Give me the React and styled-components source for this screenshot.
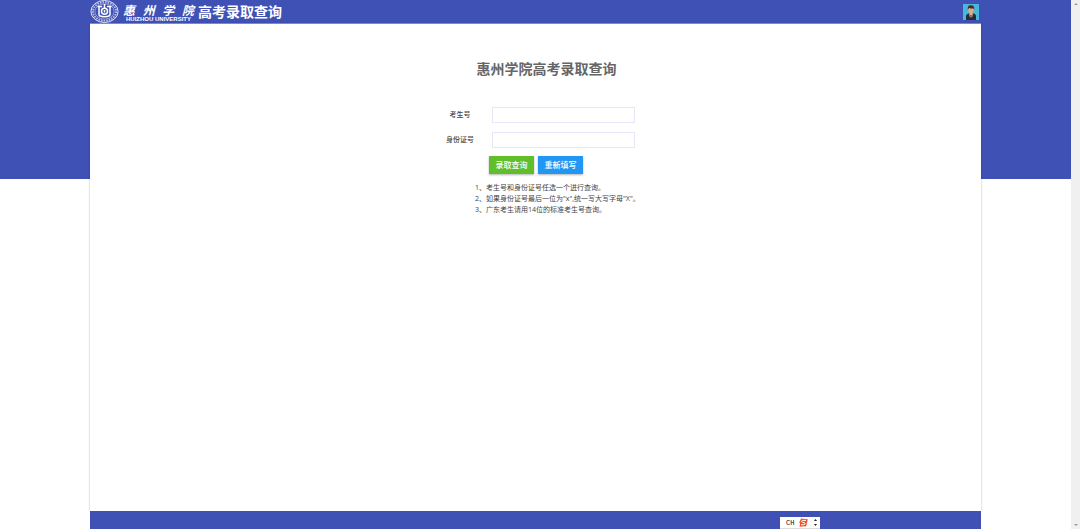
import React, { useState } from 'react';
import styled, { createGlobalStyle } from 'styled-components';

const GlobalStyle = createGlobalStyle`
  * {
    box-sizing: border-box;
  }

  body {
    margin: 0;
    background: #fff;
    color: #444;
    font-family: "Open Sans", "Noto Sans CJK SC", sans-serif;
    font-size: 7px;
  }
`;

const Page = styled.div`
  display: flex;
  height: 100vh;
  overflow: hidden;
`;

const Backdrop = styled.div`
  flex: 1;
  display: flex;
  flex-direction: column;
  padding: 0 90px;
  background: linear-gradient(#3f51b5 179px, #fff 179px);
`;

const Header = styled.header`
  display: flex;
  align-items: center;
  justify-content: space-between;
  height: 24px;
  padding-right: 2px;
  border-bottom: 1px solid #8f99d3;
  background: #3f51b5;
`;

const Brand = styled.div`
  display: flex;
  align-items: flex-start;
  gap: 4px;
  height: 24px;
  color: #fff;
`;

const Wordmark = styled.div`
  display: flex;
  flex-direction: column;
  align-items: center;
  width: 71px;
  padding-top: 3px;
`;

const SchoolName = styled.div`
  display: flex;
  justify-content: space-between;
  width: 100%;
  font-family: "Noto Sans CJK SC", sans-serif;
  font-size: 12px;
  font-style: italic;
  font-weight: bold;
  line-height: 13px;
`;

const SchoolNameEn = styled.div`
  font-family: "Liberation Sans", Arial, sans-serif;
  font-size: 6px;
  font-weight: bold;
  line-height: 6px;
  white-space: nowrap;
`;

const SystemName = styled.div`
  font-family: "Noto Sans CJK SC", sans-serif;
  font-size: 14px;
  font-weight: bold;
  line-height: 22px;
`;

const AvatarButton = styled.button`
  display: flex;
  padding: 0;
  border: 0;
  background: none;
  cursor: pointer;
`;

const Panel = styled.main`
  flex: 1;
  display: flex;
  flex-direction: column;
  align-items: center;
  padding: 33px 0 0 22px;
  background: #fff;
  box-shadow: 0 0 2px rgba(0, 0, 0, 0.3);
`;

const Title = styled.h1`
  margin: 0;
  color: #666;
  font-family: "Noto Sans CJK SC", sans-serif;
  font-size: 14px;
  font-weight: bold;
  line-height: 22px;
`;

const Form = styled.form`
  width: 237px;
  padding-top: 27px;
`;

const Field = styled.div`
  display: grid;
  grid-template-columns: 64px 143px;
  align-items: center;
  margin-bottom: 8px;
`;

const Label = styled.label`
  font-weight: 500;
  line-height: 17px;
  text-align: center;
`;

const TextInput = styled.input`
  height: 16px;
  padding: 0 4px;
  border: 1px solid #e6e6fa;
  background: #fff;
  font: inherit;
  outline: none;

  &:focus {
    border-color: #2196f3;
  }
`;

const Actions = styled.div`
  display: flex;
  gap: 4px;
  padding-left: 61px;
`;

const Button = styled.button`
  width: 45px;
  height: 18px;
  padding: 0;
  border: 0;
  background: ${({ $color }) => $color};
  box-shadow: 0 1px 2px rgba(0, 0, 0, 0.3);
  color: #fff;
  font-family: inherit;
  font-size: 8px;
  font-weight: 500;
  line-height: 18px;
  cursor: pointer;
`;

const Notes = styled.div`
  padding: 8px 0 0 47px;
  line-height: 11px;
  white-space: nowrap;
`;

const Footer = styled.footer`
  height: 18px;
  background: #3f51b5;
`;

const Scrollbar = styled.div`
  display: flex;
  flex-direction: column;
  justify-content: space-between;
  align-items: center;
  width: 9px;
  padding: 3px 0;
  background: #f0f0f0;
`;

const LanguageBar = styled.div`
  position: fixed;
  right: 260px;
  bottom: 0;
  display: flex;
  align-items: center;
  justify-content: space-between;
  width: 40px;
  height: 12px;
  padding: 0 2px 0 6px;
  border-bottom: 1px solid #ddd;
  background: #fff;
  color: #111;
  font-family: "Liberation Mono", monospace;
  font-size: 7px;
  line-height: 12px;
`;

const Emblem = () => (
  <svg width="29" height="24" viewBox="0 0 29 24" fill="none" stroke="#fff">
    <ellipse cx="14.5" cy="11.5" rx="13.6" ry="11" strokeWidth="1" opacity="0.85" />
    <ellipse cx="14.5" cy="11.5" rx="11.6" ry="9.2" strokeWidth="2" strokeDasharray="1.6 1" opacity="0.6" />
    <ellipse cx="14.5" cy="11.5" rx="9.6" ry="7.6" strokeWidth="0.6" opacity="0.7" />
    <path d="M7.5 6.5H12M17 6.5H21.5M9 6.5V15.5M20 6.5V15.5M9 15.5Q14.5 18 20 15.5" strokeWidth="1.5" />
    <circle cx="14.5" cy="11.3" r="3" strokeWidth="1.5" />
    <path d="M14.5 4V8M14.5 10V12.6" strokeWidth="1.5" />
  </svg>
);

const Avatar = () => (
  <svg width="16" height="16" viewBox="0 0 16 16">
    <path d="M0 0H16V16H0Z" fill="#46b8da" />
    <path d="M3 16V12Q3 10 6 9.5H10Q13 10 13 12V16Z" fill="#292b31" />
    <path d="M6.5 8H9.5V10L8 12L6.5 10Z" fill="#eab68b" />
    <path d="M6.3 9.6L8 12.8L9.7 9.6L9.3 12.5L8 14L6.7 12.5Z" fill="#fff" />
    <path d="M7.6 11H8.4L8.7 13.5L8 14.5L7.3 13.5Z" fill="#343642" />
    <ellipse cx="8" cy="5.8" rx="2.8" ry="3.3" fill="#e0ab80" />
    <path d="M4.8 6V3.5Q5 1.2 7.5 1.3Q11.2 1 11.2 4V6L10.4 4.5Q8 4.6 6.2 3.9L5.5 4.7Z" fill="#4a2e24" />
  </svg>
);

const Arrow = ({ down }) => (
  <svg width="4" height="2" viewBox="0 0 4 2" fill="#999">
    <path d={down ? 'M0 0H4L2 2Z' : 'M0 2H4L2 0Z'} />
  </svg>
);

const ImeLogo = () => (
  <svg width="9" height="9" viewBox="0 0 9 9">
    <path d="M2 0.6L8.8 1.2L7.2 8.2L0.6 8.7L1 5.2L0.2 4.8Z" fill="#f0522a" />
    <path d="M7 2.4H3.5Q2.2 2.8 2.7 3.8Q3.2 4.3 5 4.6Q6.6 5 5.9 6.2Q5.4 6.9 2 6.8" fill="none" stroke="#fff" strokeWidth="1" />
  </svg>
);

const ImeOptions = () => (
  <svg width="5" height="8" viewBox="0 0 5 8" fill="#222">
    <path d="M1 2H4L2.5 0ZM1 5H4L2.5 7Z" />
  </svg>
);

const App = () => {
  const [candidateNo, setCandidateNo] = useState('');
  const [idCard, setIdCard] = useState('');

  const handleReset = () => {
    setCandidateNo('');
    setIdCard('');
  };

  return (
    <>
      <GlobalStyle />
      <Page>
        <Backdrop>
          <Header>
            <Brand>
              <Emblem />
              <Wordmark>
                <SchoolName>
                  <span>惠</span>
                  <span>州</span>
                  <span>学</span>
                  <span>院</span>
                </SchoolName>
                <SchoolNameEn>HUIZHOU UNIVERSITY</SchoolNameEn>
              </Wordmark>
              <SystemName>高考录取查询</SystemName>
            </Brand>
            <AvatarButton type="button" aria-label="user">
              <Avatar />
            </AvatarButton>
          </Header>
          <Panel>
            <Title>惠州学院高考录取查询</Title>
            <Form onSubmit={(e) => e.preventDefault()}>
              <Field>
                <Label htmlFor="candidateNo">考生号</Label>
                <TextInput id="candidateNo" value={candidateNo} onChange={(e) => setCandidateNo(e.target.value)} />
              </Field>
              <Field>
                <Label htmlFor="idCard">身份证号</Label>
                <TextInput id="idCard" value={idCard} onChange={(e) => setIdCard(e.target.value)} />
              </Field>
              <Actions>
                <Button type="submit" $color="#5fbe29">录取查询</Button>
                <Button type="button" $color="#2196f3" onClick={handleReset}>重新填写</Button>
              </Actions>
              <Notes>
                <div>1、考生号和身份证号任选一个进行查询。</div>
                <div>2、如果身份证号最后一位为"x",统一写大写字母"X"。</div>
                <div>3、广东考生请用14位的标准考生号查询。</div>
              </Notes>
            </Form>
          </Panel>
          <Footer />
        </Backdrop>
        <Scrollbar>
          <Arrow />
          <Arrow down />
        </Scrollbar>
      </Page>
      <LanguageBar>
        <span>CH</span>
        <ImeLogo />
        <ImeOptions />
      </LanguageBar>
    </>
  );
};

export default App;
